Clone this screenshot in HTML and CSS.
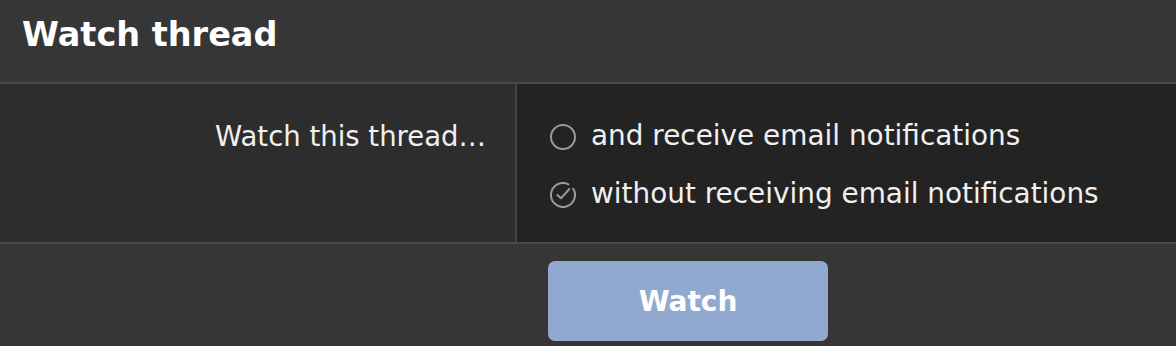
FILE: index.html
```html
<!DOCTYPE html>
<html>
<head>
<meta charset="utf-8">
<link rel="stylesheet" href="styles.css">
</head>
<body>
<div class="block">
  <h2 class="title">Watch thread</h2>
  <div class="row">
    <div class="label">Watch this thread…</div>
    <div class="options">
      <label class="opt">
        <svg class="ico" viewBox="0 0 26 26" width="26" height="26"><circle cx="13" cy="13" r="12" fill="none" stroke="#9a9a9a" stroke-width="2"/></svg>
        <span>and receive email notifications</span>
      </label>
      <label class="opt">
        <svg class="ico" viewBox="0 0 26 26" width="26" height="26"><path d="M23.2 6.7 A12 12 0 1 1 18.4 2.3" fill="none" stroke="#9a9a9a" stroke-width="2" stroke-linecap="round"/><path d="M7.3 13 L11 16.3 L19.3 7" fill="none" stroke="#9a9a9a" stroke-width="2" stroke-linecap="round" stroke-linejoin="round"/></svg>
        <span>without receiving email notifications</span>
      </label>
    </div>
  </div>
  <div class="footer">
    <button class="btn">Watch</button>
  </div>
</div>
</body>
</html>
```
FILE: styles.css
```css
html, body {
  margin: 0;
  padding: 0;
  background: #363636;
}
.block {
  font-family: "DejaVu Sans", Verdana, sans-serif;
  color: #f2f2f2;
  width: 1176px;
  height: 346px;
  background: #363636;
  overflow: hidden;
}
.title {
  margin: 0;
  height: 84px;
  box-sizing: border-box;
  padding: 15px 22px 0;
  font-size: 33.5px;
  font-weight: bold;
  line-height: 40px;
  color: #ffffff;
  border-bottom: 2px solid #4a4a4a;
}
.row {
  display: flex;
  height: 158px;
  border-bottom: 2px solid #4a4a4a;
}
.label {
  width: 517px;
  box-sizing: border-box;
  background: #2d2d2d;
  border-right: 2px solid #444444;
  text-align: right;
  padding: 34px 29px 0 0;
  font-size: 27.5px;
  line-height: 36px;
  color: #f0f0f0;
}
.options {
  flex: 1;
  background: #232323;
  padding: 34px 0 0 33px;
  display: flex;
  flex-direction: column;
  gap: 22px;
}
.opt {
  display: flex;
  align-items: center;
  gap: 15px;
  font-size: 27.9px;
  line-height: 36px;
  color: #f0f0f0;
}
.ico {
  flex: none;
  position: relative;
  top: 1px;
}
.footer {
  display: flex;
  padding: 17px 0 0 548px;
}
.btn {
  width: 280px;
  height: 80px;
  border: none;
  border-radius: 7px;
  background: #92a9cf;
  color: #ffffff;
  font-family: "DejaVu Sans", Verdana, sans-serif;
  font-weight: bold;
  font-size: 28px;
  padding: 0;
}
```
